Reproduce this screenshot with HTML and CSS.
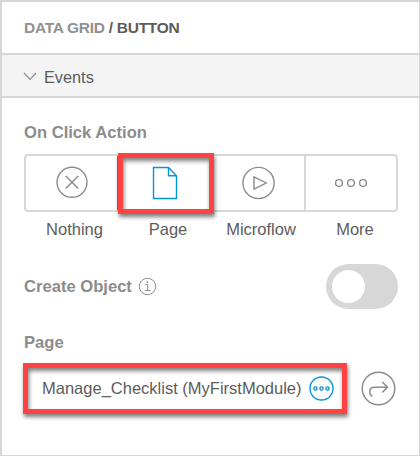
FILE: index.html
```html
<!DOCTYPE html>
<html lang="en">
<head>
<meta charset="utf-8">
<title>Button properties</title>
<link rel="stylesheet" href="styles.css">
</head>
<body>
<main class="panel">
  <header class="crumbs"><span class="parent">DATA GRID</span> / BUTTON</header>
  <div class="section">
    <svg class="chevron" width="14" height="9" viewBox="0 0 14 9"><path d="M1 1l6 6.300L13 1"/></svg>
    <span class="section-title">Events</span>
  </div>
  <div class="content">
    <h2 class="label label-action">On Click Action</h2>
    <div class="segments">
      <div class="segment">
        <svg width="34" height="34" viewBox="0 0 34 34"><circle cx="17" cy="16.300" r="15"/><path d="M10.800 10.100l12.400 12.400M23.200 10.100L10.800 22.500"/></svg>
      </div>
      <div class="segment selected">
        <svg width="26" height="34" viewBox="0 0 26 34"><path d="M1.500 1.500h15l8 8.300v22.700H1.500zM16.500 1.500v8.300h8"/></svg>
      </div>
      <div class="segment">
        <svg width="34" height="34" viewBox="0 0 34 34"><circle cx="17.500" cy="17" r="15.600"/><path d="M13 10.800v12.400L25.200 17z"/></svg>
      </div>
      <div class="segment">
        <svg width="34" height="10" viewBox="0 0 34 10"><circle cx="5" cy="5" r="3.400"/><circle cx="17" cy="5" r="3.400"/><circle cx="29" cy="5" r="3.400"/></svg>
      </div>
      <div class="highlight highlight-segment"></div>
    </div>
    <div class="captions"><span>Nothing</span><span>Page</span><span>Microflow</span><span>More</span></div>
    <div class="object-row">
      <h2 class="label">Create Object</h2>
      <svg class="info" width="18" height="18" viewBox="0 0 18 18"><circle cx="8.500" cy="8.500" r="8.200"/><path d="M6.300 6.700h2.400v5.600M5.900 12.600h5.400"/><path class="dot" d="M7.700 3.400h1.500V5H7.700z"/></svg>
      <div class="toggle"><div class="knob"></div></div>
    </div>
    <h2 class="label label-page">Page</h2>
    <div class="page-row">
      <div class="field highlight">
        <span class="value">Manage_Checklist (MyFirstModule)</span>
        <svg class="browse" width="26" height="26" viewBox="0 0 26 26"><circle cx="12.500" cy="12.500" r="11.500"/><circle cx="6.500" cy="12.500" r="1.600"/><circle cx="12.500" cy="12.500" r="1.600"/><circle cx="18.500" cy="12.500" r="1.600"/></svg>
      </div>
      <svg class="goto" width="36" height="36" viewBox="0 0 36 36"><circle cx="17.500" cy="17.500" r="16.300"/><path d="M11.500 25c-2.300-.4-2.700-2-2.700-4.500 0-2.700 1.500-4.300 4.500-4.300H26.500M21.300 11l5.200 5.200-5.200 5.200"/></svg>
    </div>
  </div>
</main>
</body>
</html>
```
FILE: styles.css
```css
* { box-sizing: border-box; }
body {
  margin: 0;
  font: 16.5px/20px "Liberation Sans", Arial, sans-serif;
  color: #5c5c5c;
  background: #fff;
}
.panel {
  width: 420px;
  height: 456px;
  border: solid #d7d7d7;
  border-width: 2px 1px 1px 2px;
  overflow: hidden;
}
svg { display: block; flex: none; fill: none; stroke: #8c8c8c; stroke-width: 1.4; }
.crumbs {
  height: 51px;
  padding: 16px 22px 0;
  font-size: 15.5px;
  line-height: 20px;
  letter-spacing: -0.28px;
  font-weight: bold;
  white-space: nowrap;
}
.parent { color: #909090; }
.section {
  display: flex;
  align-items: center;
  height: 45px;
  padding-left: 21px;
  border: solid #d7d7d7;
  border-width: 2px 0;
  background: #f4f4f4;
}
.chevron { stroke-width: 1.2; margin: 2px 7px 0 0; }
.section-title { font-size: 16.3px; padding-top: 3px; }
.content { padding: 25px 21px 0 22px; }
.label { margin: 0; font-size: 16.6px; line-height: 20px; font-weight: bold; color: #8c8c8c; }
.segments {
  position: relative;
  display: grid;
  grid-template-columns: 92px 94px 94px 94px;
  width: 374px;
  height: 58px;
  margin-top: 11px;
  border: 2px solid #d7d7d7;
  border-radius: 4px;
}
.segment { display: flex; align-items: center; justify-content: center; }
.segment:first-child { border-right: 1px solid #0595db; }
.segment:nth-child(3) { border-right: 2px solid #d7d7d7; }
.segment:nth-child(4) { width: 90px; }
.selected svg { stroke: #0595db; stroke-width: 1.4; }
.highlight { border: 5px solid #ff4343; box-shadow: 1px 3px 4px rgba(0,0,0,.5), inset 1px 3px 4px rgba(0,0,0,.5); }
.highlight-segment { position: absolute; left: 92px; top: -3px; width: 96px; height: 61px; }
.captions { display: grid; grid-template-columns: 101px 86px 100px 88px; height: 20px; margin-top: 7px; text-align: center; }
.object-row { display: flex; align-items: center; height: 45px; margin-top: 25px; }
.info { stroke-width: 1; margin-left: 7px; }
.dot { fill: #8c8c8c; stroke: none; }
.toggle { width: 72px; height: 45px; padding: 6px; margin-left: auto; border-radius: 23px; background: #d7d7d7; }
.knob { width: 33px; height: 33px; border-radius: 50%; background: #fff; }
.label-page { margin-top: 24px; }
.page-row { display: flex; align-items: center; height: 51px; margin: 10px 0 0 -1px; }
.field { display: flex; align-items: center; width: 324px; height: 51px; padding-left: 14px; }
.value { white-space: nowrap; padding-bottom: 2px; }
.browse { margin-left: auto; margin-right: 7px; stroke: #0595db; }
.goto { margin-left: 14px; stroke-width: 1.5; }
```
